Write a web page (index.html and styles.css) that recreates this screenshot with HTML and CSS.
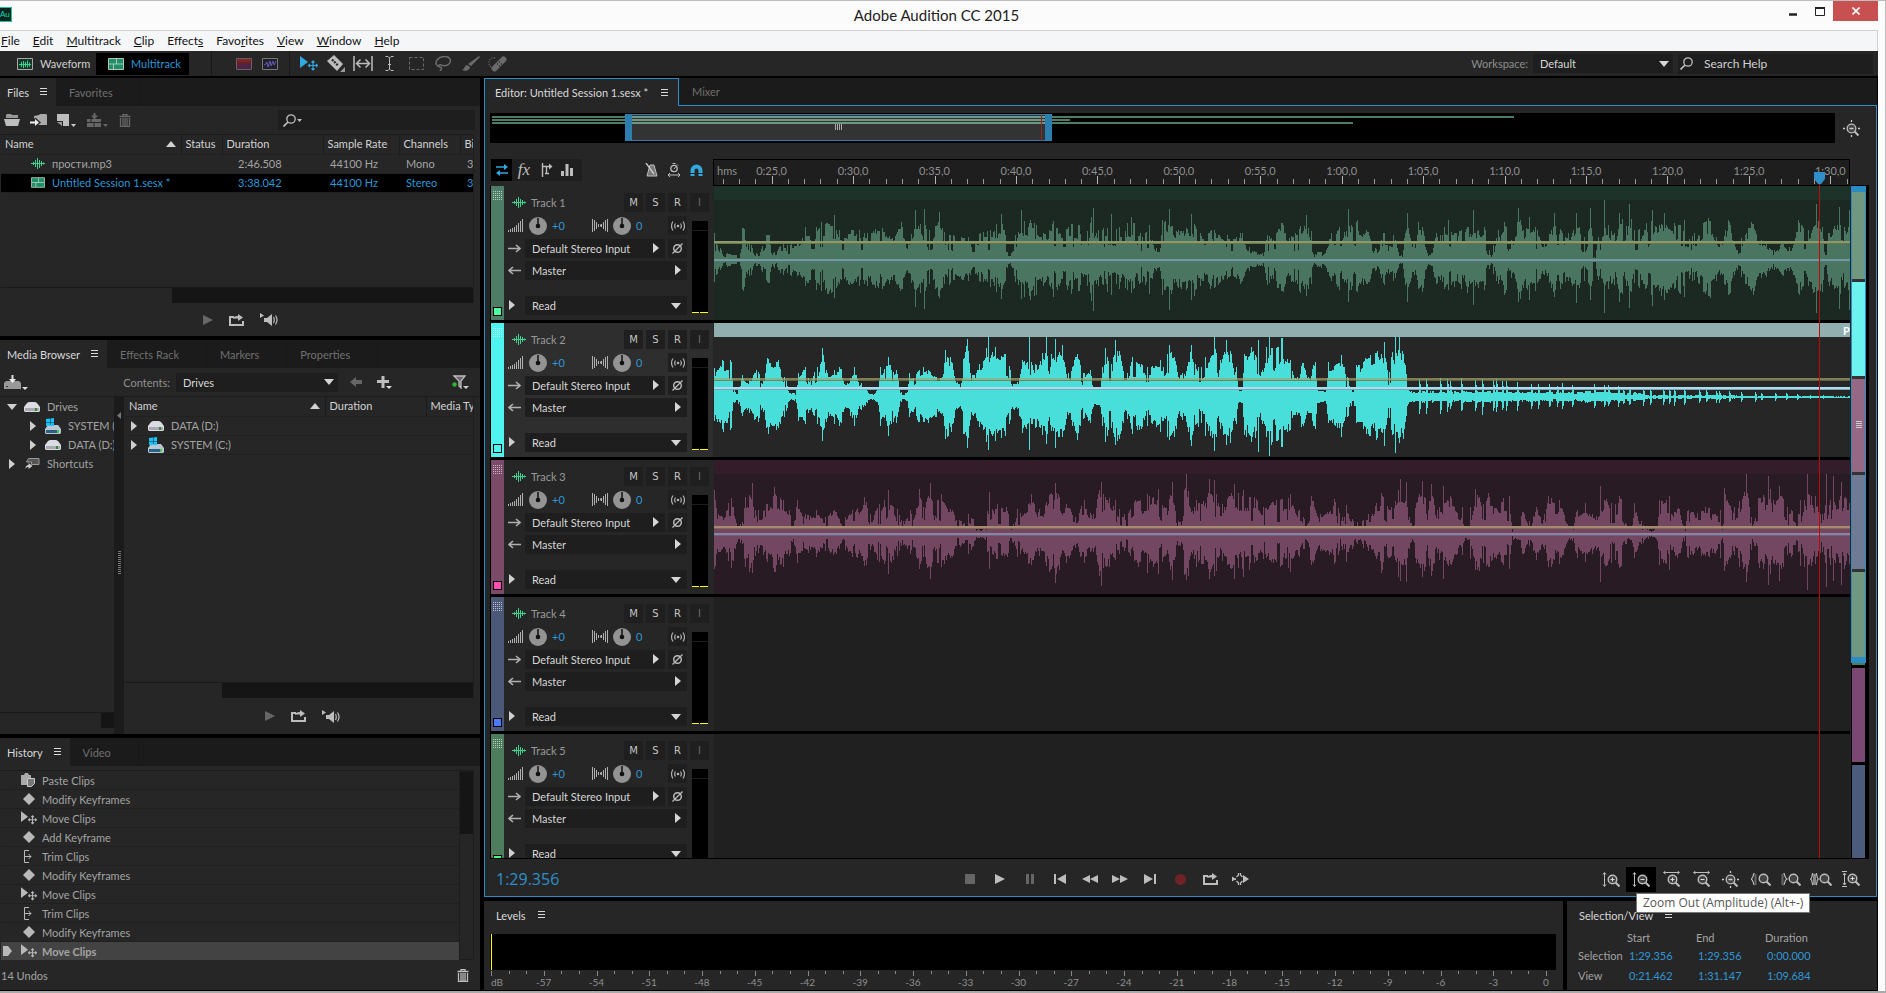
FILE: index.html
```html
<!DOCTYPE html>
<html lang="en">
<head>
<meta charset="utf-8">
<title>Adobe Audition CC 2015</title>
<link rel="stylesheet" href="styles.css">
</head>
<body>
<svg class="sprite" aria-hidden="true">
  <symbol id="wave" viewBox="0 0 14 11"><path d="M0 5.500h14M2.500 4v3M4.500 2v7M6.500 0v11M8.500 2v8M10.500 3v5M12.500 4.500v2" stroke="currentColor" fill="none"/></symbol>
  <symbol id="wavebox" viewBox="0 0 16 12"><path d="M.5.5h15v11H.5z" fill="#17372b" stroke="#a8a8a8"/><path d="M2 6.500h12M4.500 4v5M6.500 3v7M8.500 4v5M10.500 2.500v7M12.500 4.500v4" stroke="#3fd08f" fill="none"/></symbol>
  <symbol id="multibox" viewBox="0 0 16 12"><path d="M.5.5h15v11H.5z" fill="#1d9065" stroke="#b4c4bd"/><path d="M1 6h14M8.500 1v5M5.500 6v5" stroke="#b4c4bd"/></symbol>
  <symbol id="spectral" viewBox="0 0 16 12"><path d="M.5.5h15v11H.5z" fill="#652023" stroke="#6b5d62"/><path d="M1 8l2-1 2 1 2-2 2 1 2-2 2 2 2-1v5H1z" fill="#4a2549"/><path d="M1 1h14v3H1z" fill="#7b2524"/></symbol>
  <symbol id="pitch" viewBox="0 0 16 12"><path d="M.5.5h15v11H.5z" fill="#201f2c" stroke="#777"/><path d="M2 7l2-1 1-2 1 5 2-6 1 5 2-5 1 4 2-4" stroke="#6059b0" fill="none"/></symbol>
  <symbol id="move" viewBox="0 0 18 15"><path d="M0 0l8 6-8 6z" fill="currentColor"/><path d="M13 5v9M8.500 9.500h9M11.500 6.500L13 5l1.500 1.500M11.500 12.500L13 14l1.500-1.500M10 8l-1.500 1.500L10 11M16 8l1.500 1.500L16 11" stroke="currentColor" stroke-width="1.200" fill="none"/></symbol>
  <symbol id="razor" viewBox="0 0 18 17"><path d="M0 6l7-6 9 9-6 7z" fill="currentColor"/><path d="M5 4.500l6 6" stroke="#262626" stroke-width="2.200" stroke-dasharray="2 1"/><path d="M18 12v5h-5z" fill="#999"/></symbol>
  <symbol id="slip" viewBox="0 0 20 15"><path d="M1 0v15M19 0v15M4 7.500h12M7.500 3.500l-4 4 4 4M12.500 3.500l4 4-4 4" stroke="currentColor" stroke-width="1.500" fill="none"/></symbol>
  <symbol id="ibeam" viewBox="0 0 9 15"><path d="M.5.5h2.500l1.500 1.500L6 .5h2.500M.5 14.500h2.500l1.500-1.500L6 14.500h2.500M4.500 2v11M3 8.500h3" stroke="currentColor" fill="none"/></symbol>
  <symbol id="marquee" viewBox="0 0 15 13"><path d="M.5.5h14v12H.5z" stroke="currentColor" stroke-dasharray="3 2" fill="none"/></symbol>
  <symbol id="lasso" viewBox="0 0 17 15"><path d="M5 11C1 10 0 7 2 4 5 0 13-1 15 3c2 5-4 8-9 6-3-1-3 2-1 2s2 2 0 4" stroke="currentColor" stroke-width="1.500" fill="none"/></symbol>
  <symbol id="brush" viewBox="0 0 18 15"><path d="M17 0l1 1-9 9-3-2zM5 9l3 2c0 3-4 5-8 3 3-1 2-4 5-5z" fill="currentColor"/></symbol>
  <symbol id="heal" viewBox="0 0 20 16"><path d="M6.500 12.500l9-9" stroke="currentColor" stroke-width="6" stroke-linecap="round"/><path d="M9 8h1M11 10h1M11 6h1M13 8h1" stroke="#262626" stroke-width="1.300"/><path d="M7 2C1 1-1 7 3 11" stroke="currentColor" stroke-dasharray="1 1.500" fill="none" stroke-width="1.500"/></symbol>
  <symbol id="lens" viewBox="0 0 13 13"><circle cx="8" cy="5" r="4.200" stroke="currentColor" stroke-width="1.300" fill="none"/><path d="M5 8l-4.500 4.500" stroke="currentColor" stroke-width="1.700"/></symbol>
  <symbol id="menu" viewBox="0 0 7 8"><path d="M0 .5h7M0 3.500h7M0 6.500h7" stroke="currentColor"/></symbol>
  <symbol id="folder" viewBox="0 0 16 12"><path d="M2 4V1l1-1h4l1 1h6v3z" fill="#999"/><path d="M0 5h16l-2 7H2z" fill="currentColor"/></symbol>
  <symbol id="import" viewBox="0 0 17 12"><path d="M4 2l5-1 1-1h6l1 1v10H4z" fill="#aaa"/><path d="M0 8.500h7M4 5l4 3.500L4 12" stroke="#262626" stroke-width="4"/><path d="M0 8.500h6" stroke="#eee" stroke-width="2"/><path d="M5 5l4 3.500L5 12z" fill="#eee"/></symbol>
  <symbol id="newfile" viewBox="0 0 20 13"><path d="M0 0h12v12H6V7H0z" fill="currentColor"/><path d="M0 8l5 4V8z" fill="#999"/><path d="M14 10h5l-2.500 3z" fill="#ccc"/></symbol>
  <symbol id="insert" viewBox="0 0 22 14"><path d="M0 6h14v8H0z" fill="currentColor"/><path d="M0 9.500h14M7 9.500v4M4 6v3" stroke="#262626"/><path d="M7.500 0v4" stroke="currentColor" stroke-width="2"/><path d="M4 2.500h7L7.500 6.500z" fill="currentColor"/><path d="M16 11h5l-2.500 3z" fill="currentColor"/></symbol>
  <symbol id="trash" viewBox="0 0 12 13"><path d="M.5 2.500h11M4 2V.5h4V2M1.500 4v8.500h9V4M4 4v8M6 4v8M8 4v8" stroke="currentColor" stroke-width="1.300" fill="none"/></symbol>
  <symbol id="up" viewBox="0 0 10 6"><path d="M0 6l5-6 5 6z" fill="currentColor"/></symbol>
  <symbol id="down" viewBox="0 0 10 6"><path d="M0 0h10L5 6z" fill="currentColor"/></symbol>
  <symbol id="right" viewBox="0 0 6 10"><path d="M0 0l6 5-6 5z" fill="currentColor"/></symbol>
  <symbol id="play" viewBox="0 0 10 12"><path d="M0 1l10 5-10 5z" fill="currentColor"/></symbol>
  <symbol id="loop" viewBox="0 0 15 12"><path d="M5 3H1v8h13V7" stroke="currentColor" stroke-width="2" fill="none"/><path d="M4 5c0-2 2-3 5-3V0l5 3.500L9 7V4.500C7 4.500 5 4 4 5z" fill="currentColor"/></symbol>
  <symbol id="autoplay" viewBox="0 0 18 13"><path d="M0 0l4 2.500L0 5zM4 5h3l5-4v12L7 9H4z" fill="currentColor"/><path d="M13.500 4c1 2 1 4 0 6M15.500 2.500c2 3 2 6 0 9" stroke="currentColor" stroke-width="1.200" fill="none"/></symbol>
  <symbol id="mdrive" viewBox="0 0 24 15"><path d="M0 8l2-2h13l2 2v6H0z" fill="#999"/><path d="M8.500 0v6" stroke="#ddd" stroke-width="2"/><path d="M5 4h7l-3.500 4z" fill="#eee"/><path d="M2 11.500h2" stroke="#333"/><path d="M18 12h6l-3 3z" fill="#ddd"/></symbol>
  <symbol id="back" viewBox="0 0 12 10"><path d="M0 5l6-5v3h6v4H6v3z" fill="currentColor"/></symbol>
  <symbol id="plus" viewBox="0 0 15 13"><path d="M6 0v12M0 5.500h12" stroke="currentColor" stroke-width="3"/><path d="M9 10h6l-3 3z" fill="#ddd"/></symbol>
  <symbol id="filter" viewBox="0 0 17 14"><path d="M2 1h11L9 6v7L7 11V6z" stroke="currentColor" stroke-width="1.300" fill="#666"/><circle cx="2.500" cy="9.500" r="2.200" fill="#2fb52f"/><path d="M11 11h6l-3 3z" fill="#ccc"/></symbol>
  <symbol id="drive" viewBox="0 0 16 10"><path d="M0 5l3-4 2-1h6l2 1 3 4v4l-1 1H1L0 9z" fill="#dcdce4"/><path d="M1 6h14v3H1z" fill="#a9a9b3"/><path d="M11 6h2v3h-2z" fill="#2f8d30"/></symbol>
  <symbol id="sysdrive" viewBox="0 0 16 16"><path d="M0 11l3-4h10l3 4v4l-1 1H1l-1-1z" fill="#b9c7d5"/><path d="M1 12h12v3H1z" fill="#2b6283"/><path d="M12 12h2v3h-2z" fill="#4aca44"/><path d="M1 1l4-.5V4H1zM5.500.5L9 0v4H5.500zM1 4.500h4V8H1zM5.500 4.500H9V8H5.500z" fill="#18c2fb"/></symbol>
  <symbol id="shortcut" viewBox="0 0 15 11"><path d="M4 .5h10.500v6H7V4H2z" fill="#555" stroke="#999"/><path d="M1 11c0-3 1-4 3-4V5l4 3-4 3V9C3 9 2 9 1 11z" fill="#ccc"/></symbol>
  <symbol id="paste" viewBox="0 0 14 14"><path d="M0 2h3l1-2h3l1 2h2v3H6v7H0z" fill="#aaa"/><path d="M6.500 5.500h7v5l-3 3h-4z" fill="#777" stroke="#ccc"/></symbol>
  <symbol id="diamond" viewBox="0 0 12 12"><path d="M6 0l6 6-6 6-6-6z" fill="currentColor"/></symbol>
  <symbol id="trim" viewBox="0 0 9 13"><path d="M6 .5H1.500v12H6M2 6.500h6M5.500 4l2.500 2.500L5.500 9" stroke="currentColor" fill="none"/></symbol>
  <symbol id="flag" viewBox="0 0 9 10"><path d="M0 0h5l4 5-4 5H0z" fill="currentColor"/></symbol>
  <symbol id="swap" viewBox="0 0 14 12"><path d="M1 3h10M3 9h10" stroke="currentColor" stroke-width="1.600"/><path d="M9 0l4 3-4 3zM5 6L1 9l4 3z" fill="currentColor"/></symbol>
  <symbol id="sends" viewBox="0 0 12 14"><path d="M1.500 0v14M1 3.500h8M5.500 3.500v7M4 10.500h4" stroke="currentColor" stroke-width="1.400" fill="none"/><path d="M8 .5l3.500 3L8 6.500z" fill="currentColor"/></symbol>
  <symbol id="eq" viewBox="0 0 12 12"><path d="M0 7h3v5H0zM4.500 0h3v12h-3zM9 4h3v8H9z" fill="currentColor"/></symbol>
  <symbol id="metro" viewBox="0 0 13 14"><path d="M5 2h4l3 11H2z" fill="#777" stroke="currentColor"/><path d="M1 0l8 11" stroke="#ccc" stroke-width="1.300"/></symbol>
  <symbol id="watch" viewBox="0 0 14 14"><circle cx="7" cy="5.500" r="3.200" stroke="currentColor" stroke-width="1.300" fill="none"/><path d="M5.500.5h3M7 6l1.500-2M1 12h12M3 10l-2 2 2 2M11 10l2 2-2 2M10 1.500l1 1" stroke="currentColor" fill="none"/></symbol>
  <symbol id="magnet" viewBox="0 0 13 13"><path d="M2.500 12V6.500a4 4 0 0 1 8 0V12" stroke="currentColor" stroke-width="4" fill="none"/><path d="M0 9.500h5M8 9.500h5" stroke="#262626"/></symbol>
  <symbol id="zfull" viewBox="0 0 18 17"><circle cx="8.500" cy="8.500" r="4.300" stroke="currentColor" stroke-width="1.300" fill="#444"/><path d="M11.500 11.500l4 4" stroke="currentColor" stroke-width="2"/><path d="M6.500 8.500h4M8.500 0v2M8.500 15v2M0 8.500h2M15 8.500h2" stroke="#ccc" stroke-width="1.300"/></symbol>
  <symbol id="zbase" viewBox="0 0 13 13"><circle cx="5.500" cy="5.500" r="4.300" stroke="currentColor" stroke-width="1.400" fill="#444"/><path d="M8.500 8.500l4 4" stroke="currentColor" stroke-width="2"/></symbol>
  <symbol id="zvin" viewBox="0 0 18 15"><path d="M2.500 1v13M1 2.500L2.500.5 4 2.500M1 12.500l1.500 2 1.500-2" stroke="currentColor" fill="none"/><use href="#zbase" x="5" y="2" width="13" height="13"/><path d="M8.500 7.500h4M10.500 5.500v4" stroke="#ddd"/></symbol>
  <symbol id="zvout" viewBox="0 0 18 15"><path d="M2.500 1v13M1 2.500L2.500.5 4 2.500M1 12.500l1.500 2 1.500-2" stroke="currentColor" fill="none"/><use href="#zbase" x="5" y="2" width="13" height="13"/><path d="M8.500 7.500h4" stroke="#ddd"/></symbol>
  <symbol id="zhin" viewBox="0 0 17 16"><path d="M1 1.500h15M2.500 0L.5 1.500l2 1.500M14.500 0l2 1.500-2 1.500" stroke="currentColor" fill="none"/><use href="#zbase" x="4" y="3" width="13" height="13"/><path d="M7.500 8.500h4M9.500 6.500v4" stroke="#ddd"/></symbol>
  <symbol id="zhout" viewBox="0 0 17 16"><path d="M1 1.500h15M2.500 0L.5 1.500l2 1.500M14.500 0l2 1.500-2 1.500" stroke="currentColor" fill="none"/><use href="#zbase" x="4" y="3" width="13" height="13"/><path d="M7.500 8.500h4" stroke="#ddd"/></symbol>
  <symbol id="zsin" viewBox="0 0 20 13"><path d="M3.500 0C1.500 1 3 5 0 6c3 1 1.500 5 3.500 6" stroke="currentColor" stroke-width="1.200" fill="none"/><path d="M3.500 1h2v11h-2z" fill="#666"/><use href="#zbase" x="7" y="0" width="13" height="13"/></symbol>
  <symbol id="zsout" viewBox="0 0 20 13"><path d="M2.500 0c2 1 .5 5 3.500 6-3 1-1.500 5-3.500 6" stroke="currentColor" stroke-width="1.200" fill="none"/><path d="M.5 1h2v11h-2z" fill="#666"/><use href="#zbase" x="7" y="0" width="13" height="13"/></symbol>
  <symbol id="zsel" viewBox="0 0 22 13"><path d="M3 0C1.500 1 3 5 .5 6 3 7 1.500 11 3 12M6 0c1.500 1 0 5 2.500 6C6 7 7.500 11 6 12" stroke="currentColor" stroke-width="1.200" fill="none"/><path d="M3 1h3v11H3z" fill="#888"/><use href="#zbase" x="9" y="0" width="13" height="13"/></symbol>
  <symbol id="zall" viewBox="0 0 18 16"><path d="M0 .5h5M0 15.500h5M2.500 2v12M1 4l1.500-2L4 4M1 12l1.500 2L4 12" stroke="currentColor" fill="none"/><use href="#zbase" x="5" y="2" width="13" height="13"/><path d="M8.500 7.500h4M10.500 5.500v4" stroke="#ddd"/></symbol>
  <symbol id="stop" viewBox="0 0 10 10"><path d="M0 0h10v10H0z" fill="currentColor"/></symbol>
  <symbol id="pause" viewBox="0 0 9 10"><path d="M0 0h3v10H0zM5 0h3v10H5z" fill="currentColor"/></symbol>
  <symbol id="first" viewBox="0 0 12 10"><path d="M0 0h2v10H0zM12 0v10L3 5z" fill="currentColor"/></symbol>
  <symbol id="last" viewBox="0 0 12 10"><path d="M10 0h2v10h-2zM0 0v10l9-5z" fill="currentColor"/></symbol>
  <symbol id="rew" viewBox="0 0 16 10"><path d="M8 1v8L0 5zM16 1v8L8 5z" fill="currentColor"/></symbol>
  <symbol id="ff" viewBox="0 0 16 10"><path d="M0 1v8l8-4zM8 1v8l8-4z" fill="currentColor"/></symbol>
  <symbol id="rec" viewBox="0 0 11 11"><circle cx="5.500" cy="5.500" r="5.500" fill="#6e2427"/></symbol>
  <symbol id="skip" viewBox="0 0 17 12"><path d="M6.500 0v2L4.500 4M6.500 12v-2L4.500 8M8.500 0v2l2 2M8.500 12v-2l2-2M0 6h4" stroke="currentColor" stroke-width="1.300" fill="none"/><path d="M11 2l6 4-6 4zM0 3.500L4 6 0 8.500z" fill="currentColor"/></symbol>
  <symbol id="vol" viewBox="0 0 16 13"><path d="M.5 11v2M2.500 10v3M4.500 9v4M6.500 8v5M8.500 6v7M10.500 4v9M12.500 2v11M14.500 0v13" stroke="currentColor"/></symbol>
  <symbol id="pan" viewBox="0 0 16 13"><path d="M.5 0v13M2.500 1v11M4.500 3v7M6.500 5v3M8.500 5.500v2M9.500 5v3M11.500 3v7M13.500 1v11M15.500 0v13" stroke="currentColor"/></symbol>
  <symbol id="mono" viewBox="0 0 14 10"><circle cx="7" cy="5" r="1.300" fill="currentColor"/><path d="M4.500 2.500c-1 1.500-1 3.500 0 5M9.500 2.500c1 1.500 1 3.500 0 5M2 .5c-2 3-2 6 0 9M12 .5c2 3 2 6 0 9" stroke="currentColor" stroke-width="1.200" fill="none"/></symbol>
  <symbol id="phase" viewBox="0 0 11 11"><circle cx="5.500" cy="5.500" r="3.800" stroke="currentColor" stroke-width="1.400" fill="none"/><path d="M.5 10.500l10-10" stroke="currentColor" stroke-width="1.300"/></symbol>
  <symbol id="arrow-r" viewBox="0 0 13 9"><path d="M0 4.500h11M8 1l4 3.500L8 8" stroke="currentColor" stroke-width="1.600" fill="none"/></symbol>
  <symbol id="arrow-l" viewBox="0 0 13 9"><path d="M13 4.500H2M5 1L1 4.500 5 8" stroke="currentColor" stroke-width="1.600" fill="none"/></symbol>
</svg>

<div class="window">
  <header class="titlebar">
    <span class="logo">Au</span>
    <h1>Adobe Audition CC 2015</h1>
    <div class="winbtns">
      <button aria-label="Minimize"><svg width="8" height="10"><path d="M0 8.500h8" stroke="#222" stroke-width="2.500"/></svg></button>
      <button aria-label="Maximize"><svg width="10" height="9"><path d="M.5 1h9v7.500h-9z" fill="none" stroke="#222"/><path d="M0 1h10" stroke="#222" stroke-width="2"/></svg></button>
      <button class="close" aria-label="Close"><svg width="8" height="8"><path d="M.5.5l7 7M7.500.5l-7 7" stroke="#fff" stroke-width="1.600"/></svg></button>
    </div>
  </header>
  <nav class="menubar">
    <a href="#"><u>F</u>ile</a><a href="#"><u>E</u>dit</a><a href="#"><u>M</u>ultitrack</a><a href="#"><u>C</u>lip</a><a href="#">Effect<u>s</u></a><a href="#">Favo<u>r</u>ites</a><a href="#"><u>V</u>iew</a><a href="#"><u>W</u>indow</a><a href="#"><u>H</u>elp</a>
  </nav>

  <div class="toolbar">
    <button class="mode"><svg width="16" height="12"><use href="#wavebox"/></svg>Waveform</button>
    <button class="mode on"><svg width="16" height="12"><use href="#multibox"/></svg>Multitrack</button>
    <div class="tools views">
      <button aria-label="Spectral frequency"><svg width="16" height="12"><use href="#spectral"/></svg></button>
      <button aria-label="Spectral pitch"><svg width="16" height="12"><use href="#pitch"/></svg></button>
    </div>
    <div class="tools edit">
      <button class="blue" aria-label="Move"><svg width="18" height="15"><use href="#move"/></svg></button>
      <button aria-label="Razor"><svg width="18" height="17"><use href="#razor"/></svg></button>
      <button aria-label="Slip"><svg width="20" height="15"><use href="#slip"/></svg></button>
      <button aria-label="Time selection"><svg width="9" height="15"><use href="#ibeam"/></svg></button>
      <button class="dim" aria-label="Marquee"><svg width="15" height="13"><use href="#marquee"/></svg></button>
      <button class="dim" aria-label="Lasso"><svg width="17" height="15"><use href="#lasso"/></svg></button>
      <button class="dim" aria-label="Brush"><svg width="18" height="15"><use href="#brush"/></svg></button>
      <button class="dim" aria-label="Healing"><svg width="20" height="16"><use href="#heal"/></svg></button>
    </div>
    <label class="wslabel" for="ws">Workspace:</label>
    <span class="pick ws"><select id="ws"><option>Default</option></select><svg width="10" height="6"><use href="#down"/></svg></span>
    <label class="search help"><svg width="13" height="13"><use href="#lens"/></svg><input type="text" aria-label="Search Help" placeholder="Search Help"></label>
  </div>

  <main class="workspace">
    <aside class="left">
      <section class="panel">
        <div class="tabs"><button class="tab on">Files<svg width="7" height="8"><use href="#menu"/></svg></button><button class="tab">Favorites</button></div>
        <div class="ftools">
          <button aria-label="Open"><svg width="16" height="12"><use href="#folder"/></svg></button>
          <button aria-label="Import"><svg width="17" height="12"><use href="#import"/></svg></button>
          <button aria-label="New"><svg width="20" height="13"><use href="#newfile"/></svg></button>
          <button class="dim" aria-label="Insert"><svg width="22" height="14"><use href="#insert"/></svg></button>
          <button class="dim" aria-label="Delete"><svg width="12" height="13"><use href="#trash"/></svg></button>
          <label class="search"><svg width="13" height="13"><use href="#lens"/></svg><svg width="5" height="3"><use href="#down"/></svg><input type="text" aria-label="Search files"></label>
        </div>
        <div class="list">
          <table class="files">
            <colgroup><col class="c1"><col class="c2"><col class="c3"><col class="c4"><col class="c5"><col></colgroup>
            <thead><tr><th><span class="sorted">Name<svg width="10" height="6"><use href="#up"/></svg></span></th><th>Status</th><th>Duration</th><th>Sample Rate</th><th>Channels</th><th>Bi</th></tr></thead>
            <tbody>
              <tr><td><span class="fname"><svg width="14" height="11"><use href="#wave"/></svg>прости.mp3</span></td><td></td><td class="dur">2:46.508</td><td>44100 Hz</td><td>Mono</td><td>3:</td></tr>
              <tr class="sel"><td><span class="fname"><svg width="14" height="11"><use href="#multibox"/></svg>Untitled Session 1.sesx *</span></td><td></td><td class="dur">3:38.042</td><td>44100 Hz</td><td>Stereo</td><td>3:</td></tr>
            </tbody>
          </table>
          <div class="hscroll"><i></i></div>
        </div>
        <div class="preview">
          <button class="dim" aria-label="Play"><svg width="10" height="12"><use href="#play"/></svg></button>
          <button aria-label="Loop"><svg width="15" height="12"><use href="#loop"/></svg></button>
          <button aria-label="Auto-play"><svg width="18" height="13"><use href="#autoplay"/></svg></button>
        </div>
      </section>

      <section class="panel">
        <div class="tabs"><button class="tab on">Media Browser<svg width="7" height="8"><use href="#menu"/></svg></button><button class="tab">Effects Rack</button><button class="tab">Markers</button><button class="tab">Properties</button></div>
        <div class="mtools">
          <button aria-label="Drives"><svg width="24" height="15"><use href="#mdrive"/></svg></button>
          <label for="contents">Contents:</label>
          <span class="pick contents"><select id="contents"><option>Drives</option></select><svg width="10" height="6"><use href="#down"/></svg></span>
          <button class="dim" aria-label="Back"><svg width="12" height="10"><use href="#back"/></svg></button>
          <button aria-label="Add shortcut"><svg width="15" height="13"><use href="#plus"/></svg></button>
          <button class="filter" aria-label="Filter"><svg width="17" height="14"><use href="#filter"/></svg></button>
        </div>
        <div class="browser">
          <div class="tree">
            <ul>
              <li><svg class="tw" width="10" height="6"><use href="#down"/></svg><svg width="16" height="10"><use href="#drive"/></svg>Drives</li>
              <li class="sub"><svg class="tw" width="6" height="10"><use href="#right"/></svg><svg width="16" height="16"><use href="#sysdrive"/></svg>SYSTEM (C:)</li>
              <li class="sub"><svg class="tw" width="6" height="10"><use href="#right"/></svg><svg width="16" height="10"><use href="#drive"/></svg>DATA (D:)</li>
              <li><svg class="tw" width="6" height="10"><use href="#right"/></svg><svg width="16" height="11"><use href="#shortcut"/></svg>Shortcuts</li>
            </ul>
            <div class="hscroll tscroll"><i></i></div>
          </div>
          <div class="splitter"><svg width="4" height="7"><path d="M4 0v7L0 3.500z" fill="#777"/></svg><i></i></div>
          <div class="mright">
            <div class="list">
              <table class="drives">
                <colgroup><col class="d1"><col class="d2"><col></colgroup>
                <thead><tr><th><span class="sorted">Name<svg width="10" height="6"><use href="#up"/></svg></span></th><th>Duration</th><th>Media Ty</th></tr></thead>
                <tbody>
                  <tr><td colspan="3"><span class="dname"><svg width="6" height="10"><use href="#right"/></svg><svg width="16" height="10"><use href="#drive"/></svg>DATA (D:)</span></td></tr>
                  <tr><td colspan="3"><span class="dname"><svg width="6" height="10"><use href="#right"/></svg><svg width="16" height="16"><use href="#sysdrive"/></svg>SYSTEM (C:)</span></td></tr>
                </tbody>
              </table>
              <div class="hscroll mscroll"><i></i></div>
            </div>
            <div class="preview">
              <button class="dim" aria-label="Play"><svg width="10" height="12"><use href="#play"/></svg></button>
              <button aria-label="Loop"><svg width="15" height="12"><use href="#loop"/></svg></button>
              <button aria-label="Auto-play"><svg width="18" height="13"><use href="#autoplay"/></svg></button>
            </div>
          </div>
        </div>
      </section>

      <section class="panel">
        <div class="tabs"><button class="tab on">History<svg width="7" height="8"><use href="#menu"/></svg></button><button class="tab">Video</button></div>
        <div class="history">
          <ol>
            <li><svg width="14" height="14"><use href="#paste"/></svg>Paste Clips</li>
            <li><svg width="12" height="12"><use href="#diamond"/></svg>Modify Keyframes</li>
            <li><svg width="16" height="14"><use href="#move"/></svg>Move Clips</li>
            <li><svg width="12" height="12"><use href="#diamond"/></svg>Add Keyframe</li>
            <li><svg width="9" height="13"><use href="#trim"/></svg>Trim Clips</li>
            <li><svg width="12" height="12"><use href="#diamond"/></svg>Modify Keyframes</li>
            <li><svg width="16" height="14"><use href="#move"/></svg>Move Clips</li>
            <li><svg width="9" height="13"><use href="#trim"/></svg>Trim Clips</li>
            <li><svg width="12" height="12"><use href="#diamond"/></svg>Modify Keyframes</li>
            <li class="now"><svg class="flag" width="9" height="10"><use href="#flag"/></svg><svg width="16" height="14"><use href="#move"/></svg>Move Clips</li>
          </ol>
          <div class="vscroll"><i></i></div>
        </div>
        <footer class="undos">14 Undos<button aria-label="Delete"><svg width="12" height="13"><use href="#trash"/></svg></button></footer>
      </section>
    </aside>

    <div class="right">
      <section class="editor">
        <div class="etabs"><button class="tab on">Editor: Untitled Session 1.sesx *<svg width="7" height="8"><use href="#menu"/></svg></button><div class="rest"><button class="tab">Mixer</button></div></div>
        <div class="ebody">
          <div class="overview">
            <div class="map"><i class="l1"></i><i class="l2"></i><i class="l3"></i><div class="range"><b></b></div><i class="ph"></i></div>
            <button aria-label="Zoom out full"><svg width="18" height="17"><use href="#zfull"/></svg></button>
          </div>
          <div class="session">
            <div class="grid">
              <div class="htools">
                <div class="seg">
                  <button class="on" aria-label="Inputs and outputs"><svg width="14" height="12"><use href="#swap"/></svg></button>
                  <button class="fx">fx</button>
                  <button aria-label="Sends"><svg width="12" height="14"><use href="#sends"/></svg></button>
                  <button aria-label="EQ"><svg width="12" height="12"><use href="#eq"/></svg></button>
                </div>
                <div class="snap">
                  <button aria-label="Metronome"><svg width="13" height="14"><use href="#metro"/></svg></button>
                  <button aria-label="Clip stretch"><svg width="14" height="14"><use href="#watch"/></svg></button>
                  <button class="blue" aria-label="Snapping"><svg width="13" height="13"><use href="#magnet"/></svg></button>
                </div>
              </div>
              <div class="ruler" id="ruler"><span class="unit">hms</span></div>
              <div class="tracks" id="tracks"></div>
            </div>
            <div class="vnav">
              <i class="green"></i><i class="cyan"></i><i class="plum"></i><i class="slate"></i><i class="green"></i><i class="violet"></i><i class="slate"></i>
              <div class="vrange"><b></b></div>
            </div>
          </div>
          <div class="transport">
            <output class="time">1:29.356</output>
            <div class="keys">
              <button class="dim" aria-label="Stop"><svg width="10" height="10"><use href="#stop"/></svg></button>
              <button aria-label="Play"><svg width="10" height="12"><use href="#play"/></svg></button>
              <button class="dim" aria-label="Pause"><svg width="9" height="10"><use href="#pause"/></svg></button>
              <button aria-label="To previous"><svg width="12" height="10"><use href="#first"/></svg></button>
              <button aria-label="Rewind"><svg width="16" height="10"><use href="#rew"/></svg></button>
              <button aria-label="Fast forward"><svg width="16" height="10"><use href="#ff"/></svg></button>
              <button aria-label="To next"><svg width="12" height="10"><use href="#last"/></svg></button>
              <button aria-label="Record"><svg width="11" height="11"><use href="#rec"/></svg></button>
              <button aria-label="Loop playback"><svg width="15" height="12"><use href="#loop"/></svg></button>
              <button aria-label="Skip selection"><svg width="17" height="12"><use href="#skip"/></svg></button>
            </div>
            <div class="zooms">
              <button aria-label="Zoom in amplitude"><svg width="18" height="15"><use href="#zvin"/></svg></button>
              <button class="hot" aria-label="Zoom out amplitude"><svg width="18" height="15"><use href="#zvout"/></svg><span class="tip">Zoom Out (Amplitude) (Alt+-)</span></button>
              <button aria-label="Zoom in time"><svg width="17" height="16"><use href="#zhin"/></svg></button>
              <button aria-label="Zoom out time"><svg width="17" height="16"><use href="#zhout"/></svg></button>
              <button aria-label="Zoom out full"><svg width="18" height="17"><use href="#zfull"/></svg></button>
              <button aria-label="Zoom to in point"><svg width="20" height="13"><use href="#zsin"/></svg></button>
              <button aria-label="Zoom to out point"><svg width="20" height="13"><use href="#zsout"/></svg></button>
              <button aria-label="Zoom to selection"><svg width="22" height="13"><use href="#zsel"/></svg></button>
              <button aria-label="Zoom all tracks"><svg width="18" height="16"><use href="#zall"/></svg></button>
            </div>
          </div>
        </div>
      </section>

      <div class="bottom">
        <section class="panel levels">
          <h2>Levels<svg width="7" height="8"><use href="#menu"/></svg></h2>
          <div class="meter"></div>
          <div class="scale" id="scale"><span class="db">dB</span></div>
        </section>
        <section class="panel selview">
          <h2>Selection/View<svg width="7" height="8"><use href="#menu"/></svg></h2>
          <table>
            <thead><tr><td></td><th>Start</th><th>End</th><th>Duration</th></tr></thead>
            <tbody>
              <tr><th>Selection</th><td>1:29.356</td><td>1:29.356</td><td>0:00.000</td></tr>
              <tr><th>View</th><td>0:21.462</td><td>1:31.147</td><td>1:09.684</td></tr>
            </tbody>
          </table>
        </section>
      </div>
    </div>
  </main>
</div>
<script src="app.js"></script>
</body>
</html>
```

FILE: styles.css
```css
* { box-sizing: border-box; }
body {
  margin: 0;
  background: #fbfbfb;
  color: #a3a3a3;
  font: 11px/19px Lato, "Open Sans", "Noto Sans", sans-serif;
}
h1, h2, ul, ol { margin: 0; padding: 0; font-weight: normal; list-style: none; }
button, input, select { font: inherit; color: inherit; background: none; border: 0; padding: 0; margin: 0; outline: 0; }
button { display: flex; align-items: center; justify-content: center; color: #bdbdbd; }
svg { display: block; flex: none; }
i, b { display: block; }
table { border-collapse: collapse; border-spacing: 0; }
th, td { padding: 0; text-align: left; font-weight: normal; white-space: nowrap; overflow: hidden; }
.sprite { position: absolute; width: 0; height: 0; }
.dim { color: #6b6b6b; }
.blue { color: #30a9e0; }

.window { display: flex; flex-direction: column; height: 100vh; border-top: 1px solid #bdbdbd; border-right: 1px solid #bdbdbd; border-bottom: 2px solid #a9a9a9; padding-right: 7px; overflow: hidden; }

.titlebar { display: flex; justify-content: space-between; align-items: flex-start; height: 29px; flex: none; position: relative; }
.titlebar h1 { flex: 1; text-align: center; font-size: 15px; line-height: 29px; color: #222; padding-left: 82px; }
.logo { width: 12px; height: 15px; margin-top: 6px; background: #08251f; border: 1px solid #18c3a0; border-left: 0; color: #1ed6b0; font-size: 8px; line-height: 13px; }
.winbtns { display: flex; }
.winbtns button { width: 27px; height: 20px; }
.winbtns button.close { width: 45px; background: #c75050; }

.menubar { display: flex; gap: 13px; height: 21px; flex: none; padding-left: 1px; background: #f5f6f8; border-top: 1px solid #cfd0d1; border-right: 1px solid #cfd0d1; font-size: 12px; line-height: 20px; }
.menubar a { color: #111; text-decoration: none; }

.toolbar { display: flex; align-items: center; height: 27px; flex: none; background: #262626; border-bottom: 2px solid #000; color: #8f8f8f; }
.mode { justify-content: flex-start; width: 93px; height: 22px; gap: 7px; padding-left: 12px; color: #cfcfcf; }
.mode:first-child { margin-left: 5px; width: 91px; }
.mode.on { background: #000; color: #2e97d6; }
.tools { display: flex; align-items: center; height: 25px; color: #bdbdbd; }
.views { gap: 10px; margin-left: 22px; padding: 0 11px 0 24px; border-left: 1px solid #181818; }
.edit { padding-left: 5px; border-left: 1px solid #181818; }
.edit button { width: 27px; }
.tools .dim { color: #6b6b6b; }
.tools .blue, .snap .blue { color: #30a9e0; }
.wslabel { margin-left: auto; margin-right: 5px; }
.pick { position: relative; display: flex; align-items: center; height: 19px; background: #1e1e1e; color: #d6d6d6; }
.pick select { appearance: none; width: 100%; height: 19px; padding: 0 18px 0 7px; }
.pick svg { position: absolute; right: 4px; pointer-events: none; color: #d6d6d6; }
.ws { width: 140px; margin-right: 5px; }
.search { display: flex; align-items: center; background: #1e1e1e; height: 20px; color: #bdbdbd; padding-left: 5px; }
.search input { flex: 1; min-width: 0; color: #cfcfcf; }
.search input::placeholder { color: #cfcfcf; opacity: 1; }
.help { width: 195px; margin-right: 5px; gap: 11px; padding-left: 2px; font-size: 12px; }

.workspace { flex: 1; min-height: 0; display: grid; grid-template-columns: 480px minmax(0, 1fr); gap: 4px; background: #000; padding: 0 1px 1px 0; }
.left { display: grid; grid-template-rows: 258fr 394fr 252fr; gap: 4px; min-height: 0; }
.panel { display: flex; flex-direction: column; min-height: 0; min-width: 0; background: #262626; overflow: hidden; }
.tabs { display: flex; height: 28px; flex: none; background: #1b1b1b; }
.tab { padding: 0 27px 0 13px; color: #707070; }
.tab + .tab { border-right: 1px solid #181818; }
.tab.on { background: #262626; color: #d9d9d9; padding: 0 9px 0 7px; gap: 11px; }

.ftools { display: flex; align-items: center; height: 28px; flex: none; padding: 0 5px 0 4px; gap: 10px; }
.ftools .search { width: 197px; margin-left: auto; gap: 1px; }
.ftools button { color: #bdbdbd; }
.ftools button.dim, .preview button.dim, .keys button.dim, .mtools button.dim { color: #666; }
.list { flex: 1; min-height: 0; display: flex; flex-direction: column; margin: 0 6px 0 1px; border-top: 1px solid #1b1b1b; border-right: 1px solid #1e1e1e; overflow: hidden; }
.list table { table-layout: fixed; width: 100%; line-height: 18px; }
.list tr { height: 19px; border-bottom: 1px solid #212121; }
.list th { color: #d2d2d2; padding-left: 4px; border-left: 1px solid #1c1c1c; }
.list th:first-child { border-left: 0; }
.c1 { width: 180px; } .c2 { width: 41px; } .c3 { width: 101px; } .c4 { width: 76px; } .c5 { width: 61px; }
.files td { padding-left: 7px; }
.files td.dur { padding-left: 16px; }
.files td:first-child { padding-left: 30px; }
.sel { background: #000; color: #2e97d6; }
.sorted { display: flex; align-items: center; justify-content: space-between; padding-right: 5px; }
.fname { display: flex; align-items: center; gap: 7px; height: 18px; }
.fname svg { color: #3fd08f; }
.hscroll { margin-top: auto; height: 16px; flex: none; background: #151515; border-top: 1px solid #1a1a1a; }
.hscroll i { width: 171px; height: 15px; background: #262626; }
.preview { display: flex; align-items: center; justify-content: center; gap: 16px; height: 33px; flex: none; }
.preview button { color: #bdbdbd; }

.mtools { display: flex; align-items: center; height: 28px; flex: none; padding: 0 11px 0 4px; }
.mtools label { margin: 0 6px 0 auto; color: #8f8f8f; }
.contents { width: 162px; margin-right: 12px; }
.mtools .dim { margin-right: 15px; }
.mtools .filter { margin-left: 60px; }
.browser { flex: 1; min-height: 0; display: flex; border-top: 1px solid #1b1b1b; }
.tree { width: 114px; flex: none; display: flex; flex-direction: column; padding-bottom: 6px; overflow: hidden; white-space: nowrap; }
.tree li { display: flex; align-items: center; height: 19px; gap: 7px; padding-left: 7px; }
.tree .tw { width: 10px; color: #cfcfcf; }
.tree li.sub { padding-left: 28px; }
.tscroll i { width: 101px; }
.splitter { width: 10px; flex: none; background: #1b1b1b; display: flex; flex-direction: column; align-items: center; padding-top: 15px; }
.splitter i { width: 3px; height: 23px; margin-top: 132px; background: repeating-linear-gradient(#777 0 1px, #1b1b1b 1px 2px); }
.mright { flex: 1; min-width: 0; display: flex; flex-direction: column; }
.mright .list { border-top: 0; }
.mright .preview { height: 36px; }
.d1 { width: 200px; } .d2 { width: 101px; }
.dname { display: flex; align-items: center; gap: 7px; padding-left: 6px; height: 18px; }
.dname svg:first-child { color: #cfcfcf; margin-right: 4px; }
.mscroll i { width: 97px; }

.history { display: flex; margin: 4px 6px 0 1px; border-top: 1px solid #1b1b1b; flex: 1; min-height: 0; overflow: hidden; }
.history ol { flex: 1; }
.history li { position: relative; display: flex; align-items: center; height: 19px; padding-left: 41px; border-bottom: 1px solid #202020; }
.history li svg { position: absolute; left: 20px; color: #b8b8b8; }
.history li svg[width="12"], .history li svg[width="9"] { left: 22px; }
.history li svg.flag { left: 2px; }
.history .now { background: #434343; font-weight: bold; }
.vscroll { width: 15px; border: 1px solid #1d1d1d; }
.vscroll i { height: 62px; background: #151515; }
.undos { display: flex; align-items: center; justify-content: space-between; height: 30px; flex: none; padding: 0 11px 0 1px; }

.right { display: flex; flex-direction: column; gap: 4px; min-width: 0; min-height: 0; }
.editor { flex: 1; min-height: 0; display: flex; flex-direction: column; background: #262626; }
.etabs { display: flex; height: 28px; flex: none; }
.etabs .tab.on { min-width: 195px; justify-content: space-between; border: 1px solid #2b8cc4; border-bottom: 0; padding: 0 10px; }
.etabs .rest { flex: 1; display: flex; background: #1b1b1b; border-bottom: 1px solid #2b8cc4; }
.ebody { flex: 1; min-height: 0; display: flex; flex-direction: column; border: 1px solid #2b8cc4; border-top: 0; padding: 7px 7px 0 5px; }
.overview { display: flex; align-items: center; height: 30px; flex: none; }
.map { position: relative; flex: 1; height: 30px; margin-right: 7px; background: #000; }
.overview button { width: 20px; margin-right: 7px; }
.map i { position: absolute; left: 2px; height: 2px; background: #4d7d66; }
.map .l1 { top: 3px; width: 76%; }
.map .l2 { top: 6px; width: 43%; }
.map .l3 { top: 9px; width: 64%; }
.map .ph { left: 41%; top: 2px; width: 1px; height: 26px; background: #8d2b2b; }
.range { position: absolute; left: 10%; right: 58.2%; top: 1px; height: 27px; background: rgba(255, 255, 255, .2); border: 1px solid #2b7eae; border-width: 1px 7px; display: flex; justify-content: center; }
.range b { width: 7px; height: 6px; margin-top: 9px; background: repeating-linear-gradient(90deg, #aaa 0 1px, #333 1px 2px); }

.session { flex: 1; min-height: 0; display: flex; margin-top: 16px; border-bottom: 1px solid #000; }
.grid { flex: 1; min-width: 0; display: grid; grid-template: 27px minmax(0, 1fr) / 223px minmax(0, 1fr); position: relative; }
.htools { display: flex; justify-content: space-between; align-items: flex-start; padding: 0 10px 0 1px; }
.seg { display: flex; background: #1f1f1f; padding-right: 5px; }
.seg button { width: 21px; height: 22px; }
.seg .on { background: #000; color: #30a9e0; }
.seg .fx { font: italic 17px/20px "Liberation Serif", serif; width: 24px; }
.seg button:last-child { width: 20px; }
.snap { display: flex; gap: 9px; height: 22px; }
.ruler { position: relative; border: 1px solid #000; background: #1e1e1e; color: #8f8f8f; overflow: hidden; }
.ruler .unit { position: absolute; left: 3px; top: 1px; }
.ruler .lab { position: absolute; top: 1px; width: 60px; margin-left: -30px; text-align: center; }
.ruler .tick { position: absolute; bottom: 1px; width: 1px; height: 5px; background: #999; }
.ruler .tick.major { height: 8px; background: #b5b5b5; }
.phbox { position: absolute; z-index: 2; left: 223px; right: 1px; top: 0; bottom: 0; pointer-events: none; }
.playhead { position: absolute; top: 13px; bottom: 0; width: 11px; margin-left: -6px; }
.playhead::after { content: ""; position: absolute; left: 5px; top: 12px; bottom: 0; width: 1px; background: #b80d0a; }
.tracks { grid-column: 1 / 3; display: flex; flex-direction: column; gap: 3px; background: #000; overflow: hidden; padding-left: 1px; }
.track { flex: none; height: 134px; display: flex; background: #262626; }
.strip { width: 13px; flex: none; display: flex; flex-direction: column; justify-content: space-between; align-items: center; padding: 5px 0 4px; background: var(--c); }
.strip i { width: 9px; height: 10px; background: repeating-linear-gradient(90deg, transparent 0 1px, var(--c) 1px 2px), repeating-linear-gradient(rgba(255, 255, 255, .6) 0 1px, var(--c) 1px 2px); }
.strip b { width: 9px; height: 9px; background: var(--m); border: 1px solid #000; }
.head { width: 209px; flex: none; display: grid; grid-template-columns: 21px 162px 26px; grid-template-rows: 28px 23px 22px 22px 35px; }
.head.active { background: #2e2e2e; }
.r1, .r2 { grid-column: 1 / 3; display: flex; align-items: center; }
.r1 { grid-column: 1 / 4; padding: 4px 4px 0 8px; gap: 5px; color: #999; }
.r1 svg { color: #3fd08f; }
.r1 .name { flex: 1; }
.r1 button, .sq { width: 19px; height: 19px; background: #1f1f1f; }
.r1 button { margin-left: -2px; font: 10px/19px "DejaVu Sans", sans-serif; color: #c4c4c4; }
.r1 .rec { color: #6b6b6b; }
.r2 { padding-left: 4px; color: #2e97d6; gap: 5px; }
.r2 svg { color: #b0b0b0; }
.r2 .val { width: 35px; }
.r2 .val2 { flex: 1; }
.mtr { grid-column: 3; grid-row: 2 / 6; margin: 7px 5px 0; height: 92px; background: linear-gradient(90deg, #ff0 7px, #000 7px 8px, #ff0 8px) bottom / 100% 1px no-repeat, linear-gradient(#1c1c1c, #1c1c1c) 0 9px / 100% 1px no-repeat, #000; }
.head > svg { align-self: center; justify-self: center; color: #b0b0b0; }
.io { display: flex; gap: 3px; align-items: center; }
.io .pick { flex: 1; }
.io .pick svg { right: 6px; }
.auto { align-items: flex-end; padding-bottom: 1px; }
.head > svg.exp { align-self: end; justify-self: start; margin: 0 0 6px 5px; color: #d0d0d0; }
.clip { flex: 1; min-width: 0; margin-left: 1px; position: relative; background: #202020; }
.clip .bar { height: 14px; display: flex; justify-content: flex-end; overflow: hidden; color: #fff; font-weight: bold; line-height: 15px; }
.clip .bar span { width: 7px; overflow: hidden; }
.clip .wav { width: 100%; height: 120px; }
.line { position: absolute; left: 0; right: 0; height: 3px; border-bottom: 1px solid rgba(0, 0, 0, .25); }
.green-clip { background: #1c2922; color: #4a7560; } .green-clip .bar { background: #1d3229; }
.cyan-clip { background: #262626; color: #48dfdb; } .cyan-clip .bar { background: #92afb0; }
.plum-clip { background: #281b23; color: #734661; } .plum-clip .bar { background: #331d2a; }

.vnav { position: relative; flex: none; width: 18px; margin: 26px 0 0 1px; padding: 0 4px 0 1px; background: #000; display: flex; flex-direction: column; gap: 3px; border-top: 1px solid #000; }
.vnav i { flex: 1; }
.green { background: #4d7d60; } .cyan { background: #48f0ec; } .plum { background: #7b4466; } .slate { background: #4b5b7b; } .violet { background: #7b4874; }
.vrange { position: absolute; left: 0; right: 3px; top: 0; height: 71%; background: rgba(255, 255, 255, .2); border: 1px solid #2b8cc4; border-width: 6px 1px; display: flex; align-items: center; justify-content: center; }
.vrange b { width: 6px; height: 7px; background: repeating-linear-gradient(#ccc 0 1px, transparent 1px 2px); }

.transport { height: 37px; flex: none; display: flex; align-items: center; justify-content: space-between; margin-right: 3px; padding-top: 3px; }
.time { width: 465px; padding-left: 6px; font: 16px/20px "Open Sans", sans-serif; color: #2e8fcb; }
.keys, .zooms { display: flex; }
.keys button, .zooms button { width: 30px; height: 25px; position: relative; }
.zooms { margin-left: auto; }
.zooms .hot { background: #000; }
.zooms .tip { position: absolute; z-index: 3; left: 10px; top: 26px; padding: 0 6px; height: 20px; background: #fff; border: 1px solid #767676; color: #575757; font: 12px/18px "Open Sans", sans-serif; white-space: nowrap; }

.bottom { display: grid; grid-template-columns: minmax(0, 1079fr) minmax(0, 310fr); gap: 4px; height: 89px; flex: none; }
.bottom h2 { display: flex; align-items: center; gap: 12px; height: 28px; flex: none; padding-left: 12px; font-size: 11px; color: #d9d9d9; }
.meter { height: 36px; flex: none; margin: 5px 7px 0 6px; background: linear-gradient(#ff0, #ff0) 1px 0 / 1px 100% no-repeat, #000; }
.scale { position: relative; flex: 1; margin: 0 17px 0 7px; color: #8f8f8f; font-size: 10px; }
.scale span, .scale i { position: absolute; }
.scale span { top: 3px; width: 30px; margin-left: -15px; text-align: center; }
.scale .db { margin: 0; text-align: left; }
.scale i { top: 1px; width: 1px; height: 3px; background: #888; }
.scale i.major { height: 5px; }
.selview table { margin-left: 11px; width: 254px; table-layout: fixed; }
.selview tbody td { color: #2e97d6; padding-left: 2px; }
.selview tr { height: 20px; }
.selview thead tr { height: 17px; }
.selview th, .selview td { line-height: 16px; width: 69px; }
.selview tr > :first-child { width: 49px; }
```

FILE: app.js
```js
const VIEW_START = 21.462;
const VIEW_LENGTH = 69.684;
const percent = t => (t - VIEW_START) / VIEW_LENGTH * 100;

// Peak envelopes: position along the clip, amplitude.
const green = [0,27,6,12,13,7,26,7,28,32,35,17,42,7,55,25,60,8,69,17,84,17,91,33,102,33,107,38,120,45,125,30,145,30,168,32,175,24,187,38,194,16,201,50,210,51,215,30,225,48,230,28,254,23,276,30,287,46,290,30,293,8,298,8,301,25,307,50,316,40,339,39,357,36,379,52,384,30,397,46,405,33,417,43,426,27,435,35,442,12,446,12,448,40,455,51,464,30,477,46,486,27,500,30,513,25,526,27,535,13,548,7,553,25,567,37,580,27,591,45,602,8,606,8,616,27,633,51,642,40,651,30,660,12,669,27,678,25,686,5,692,47,699,17,703,38,716,7,721,27,733,40,739,27,746,30,758,50,763,30,769,33,774,10,783,30,789,38,796,20,803,52,808,30,814,43,820,33,829,17,836,30,839,47,853,27,861,47,869,23,875,52,879,3,883,23,889,60,899,27,904,47,914,56,919,30,931,37,937,50,949,47,959,37,969,40,979,27,993,42,1006,17,1013,40,1019,17,1036,38,1046,20,1059,10,1066,17,1074,13,1083,40,1093,30,1101,56,1107,33,1110,5,1114,27,1124,53,1129,33,1134,50];
const cyan = [0,29,8,37,16,37,20,7,24,7,28,22,35,17,42,27,49,17,53,39,64,37,70,20,76,4,80,4,84,24,91,30,96,17,103,30,108,49,112,27,125,30,133,14,140,30,147,14,158,3,164,8,166,30,174,40,182,27,187,5,193,5,195,24,209,30,228,20,231,47,236,40,243,15,253,58,258,22,265,33,274,60,281,50,290,43,303,15,308,37,315,60,321,33,332,60,341,58,348,52,354,24,363,43,370,24,376,27,379,10,386,10,388,30,391,49,397,33,401,57,413,24,418,40,433,30,446,37,455,52,468,24,477,52,484,30,491,40,500,60,506,37,512,57,522,30,524,8,528,8,530,43,537,50,544,57,548,27,552,50,555,60,567,59,575,37,582,20,588,34,593,20,600,35,602,7,611,7,613,35,626,42,632,20,636,10,640,10,641,32,655,42,662,46,669,55,674,25,677,45,680,60,684,60,687,46,690,32,693,7,696,6,760,6,820,5,870,6,915,5,940,2,1000,2,1050,1,1134,1];
const cyanSpikes = [704,18,711,18,725,19,732,18,735,16,746,19,760,17,767,18,778,17,781,18,787,16,791,16,802,15,816,13,823,13,834,13,842,11,847,14,857,12,879,13,889,12,893,12,903,11,908,9,914,10,928,9,935,9,948,9,954,8,959,9,969,8,984,7,991,7,1001,6,1004,6,1014,6,1026,5,1040,5,1046,4,1060,4,1071,4,1082,3,1095,2,1108,2];
const plum = [0,44,4,20,17,36,26,10,31,37,38,51,44,24,53,30,60,47,69,34,75,24,80,13,83,34,91,20,102,24,111,17,120,24,131,17,138,24,150,37,156,20,165,30,174,44,183,25,187,14,196,24,205,45,209,27,216,51,227,40,236,25,245,14,254,20,259,15,264,5,271,6,275,42,283,30,292,27,299,10,303,25,317,40,325,25,341,51,352,30,361,17,370,34,379,20,387,52,401,34,410,20,421,34,433,40,444,45,450,27,458,52,464,13,472,60,482,34,495,55,500,54,508,30,520,50,529,44,540,37,549,27,562,34,575,40,584,24,588,17,596,38,605,20,619,35,627,17,631,29,642,12,653,20,666,41,676,27,685,55,691,52,694,17,707,53,716,50,722,24,728,48,735,38,747,27,749,7,753,7,755,27,760,45,773,41,788,36,794,38,798,7,804,7,807,22,814,13,821,27,829,20,833,38,844,34,857,7,862,24,870,31,877,20,885,48,896,31,904,38,915,7,919,31,926,13,937,3,942,7,944,34,954,38,963,26,969,8,973,24,990,27,1005,24,1008,10,1009,46,1019,27,1031,60,1036,17,1043,36,1053,58,1064,48,1072,27,1083,20,1085,34,1092,60,1100,38,1105,20,1111,60,1118,58,1126,52,1134,31];

let seed = 11;
const rand = () => (seed = (seed * 16807) % 2147483647) / 2147483647;

function wavePath(points, floor, cap, spikes = []) {
  const peaks = new Map();
  for (let i = 0; i < points.length; i += 2) peaks.set(points[i], points[i + 1]);
  for (let i = 0; i < spikes.length; i += 2) {
    peaks.set(spikes[i], spikes[i + 1]);
    peaks.set(spikes[i] + 1, spikes[i + 1] * .7);
  }
  let k = 0, hold = 0, noise = 1, d = '';
  for (let x = 0; x < 1135; x++) {
    while (k + 4 < points.length && points[k + 2] <= x) k += 2;
    const t = (x - points[k]) / (points[k + 2] - points[k]);
    const f = Math.max(0, Math.min(1, (t - .5) * 2 + .5));
    const e = points[k + 1] + (points[k + 3] - points[k + 1]) * f;
    if (hold-- <= 0) {
      noise = rand() < .1 ? floor * .7 : floor + (1 - floor) * rand();
      hold = Math.floor(rand() * 2.6);
    }
    const up = peaks.get(x) ?? Math.min(e, cap) * noise + Math.max(0, e - cap) * rand() * .6;
    const dn = up * (.75 + .25 * rand());
    d += `M${x} ${(60 - up).toFixed(1)}h1V${(60 + Math.max(1, dn)).toFixed(1)}h-1z`;
  }
  return d;
}

const tracks = [
  { c: '#4d7d66', m: '#4dffa0', clip: 'green', pts: green, floor: .5, cap: 38, vol: 55, pan: 73, lines: ['#8c9a6b', '#719b9b'] },
  { c: '#4ff3f0', m: '#4ff3f0', clip: 'cyan', pts: cyan, spikes: cyanSpikes, floor: .7, cap: 44, vol: 55, pan: 64, lines: ['rgba(165,165,105,.7)', '#a8dcee'], active: true },
  { c: '#7b4a69', m: '#ff4db4', clip: 'plum', pts: plum, floor: .5, cap: 38, vol: 66, pan: 73, lines: ['#a58a70', '#8d83a0'] },
  { c: '#4b5878', m: '#4a7bff' },
  { c: '#4d7d5d', m: '#41ff80' }
];

const icon = (id, w, h, cls = '') => `<svg class="${cls}" width="${w}" height="${h}"><use href="#${id}"/></svg>`;
const knob = label => `<button aria-label="${label}"><svg width="18" height="18"><circle cx="9" cy="9" r="9" fill="#939393"/><path d="M9 1v8" stroke="#111" stroke-width="1.500"/><circle cx="9" cy="9" r="2.300" fill="#111"/></svg></button>`;
const pick = (label, text, tri) => `<span class="pick"><select aria-label="${label}"><option>${text}</option></select>${tri}</span>`;

document.getElementById('tracks').innerHTML = tracks.map((t, i) => `
  <div class="track">
    <div class="strip" style="--c:${t.c};--m:${t.m}"><i></i><b></b></div>
    <div class="head${t.active ? ' active' : ''}">
      <div class="r1">${icon('wave', 14, 11)}<span class="name">Track ${i + 1}</span><button>M</button><button>S</button><button>R</button><button class="rec">I</button></div>
      <div class="r2">${icon('vol', 16, 13)}${knob('Volume')}<span class="val">+0</span>${icon('pan', 16, 13)}${knob('Pan')}<span class="val2">0</span><button class="sq" aria-label="Sum to mono">${icon('mono', 14, 10)}</button></div>
      <div class="mtr"></div>
      ${icon('arrow-r', 13, 9)}
      <div class="io">${pick('Input', 'Default Stereo Input', icon('right', 6, 10))}<button class="sq" aria-label="Polarity">${icon('phase', 11, 11)}</button></div>
      ${icon('arrow-l', 13, 9)}
      <div class="io">${pick('Output', 'Master', icon('right', 6, 10))}</div>
      ${icon('right', 6, 10, 'exp')}
      <div class="io auto">${pick('Automation', 'Read', icon('down', 10, 6))}</div>
    </div>
    ${t.clip ? `<div class="clip ${t.clip}-clip"><div class="bar">${t.active ? '<span>Pan</span>' : ''}</div>
      <svg class="wav" viewBox="0 0 1135 120" preserveAspectRatio="none" shape-rendering="crispEdges"><path fill="currentColor" d="${wavePath(t.pts, t.floor, t.cap, t.spikes)}"/></svg>
      <div class="line" style="top:${t.vol}px;background:${t.lines[0]}"></div>
      <div class="line" style="top:${t.pan}px;background:${t.lines[1]}"></div></div>` : '<div class="clip"></div>'}
  </div>`).join('');

let marks = '';
for (let s = 22; s <= 91; s++) {
  marks += `<i class="tick${s % 5 ? '' : ' major'}" style="left:${percent(s)}%"></i>`;
  if (s % 5 === 0) marks += `<span class="lab" style="left:${percent(s)}%">${Math.floor(s / 60)}:${String(s % 60).padStart(2, '0')},0</span>`;
}
const ruler = document.getElementById('ruler');
ruler.insertAdjacentHTML('beforeend', marks);
ruler.parentElement.insertAdjacentHTML('beforeend', `<div class="phbox"><div class="playhead" style="left:${percent(89.356)}%"><svg width="11" height="12"><path d="M0 0h11v7l-4 5H4L0 7z" fill="#2e8fcb"/></svg></div></div>`);

let db = '';
for (let v = -60; v <= 0; v++) {
  const left = (v + 60) / 60 * 100;
  db += `<i class="${v % 3 ? '' : 'major'}" style="left:${left}%"></i>`;
  if (v % 3 === 0 && v > -60) db += `<span style="left:${left}%">${v}</span>`;
}
document.getElementById('scale').insertAdjacentHTML('beforeend', db);
```
